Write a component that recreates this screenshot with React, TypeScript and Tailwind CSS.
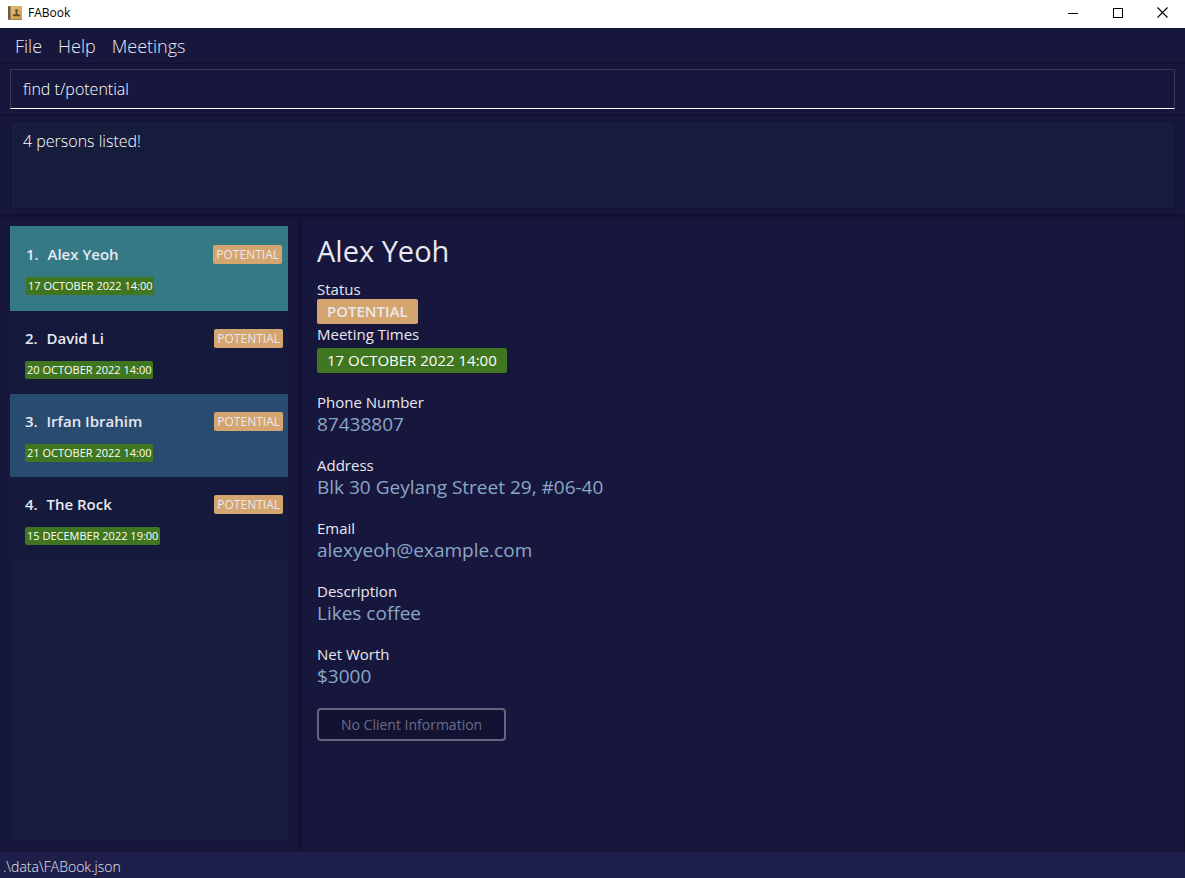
import { useState } from "react";

type Person = { name: string; status: string; meeting: string };

const persons: Person[] = [
  { name: "Alex Yeoh", status: "POTENTIAL", meeting: "17 OCTOBER 2022 14:00" },
  { name: "David Li", status: "POTENTIAL", meeting: "20 OCTOBER 2022 14:00" },
  { name: "Irfan Ibrahim", status: "POTENTIAL", meeting: "21 OCTOBER 2022 14:00" },
  { name: "The Rock", status: "POTENTIAL", meeting: "15 DECEMBER 2022 19:00" },
];

const fields = [
  { label: "Phone Number", value: "87438807" },
  { label: "Address", value: "Blk 30 Geylang Street 29, #06-40" },
  { label: "Email", value: "alexyeoh@example.com" },
  { label: "Description", value: "Likes coffee" },
  { label: "Net Worth", value: "$3000" },
];

function BookIcon() {
  return (
    <svg width="14" height="14" viewBox="0 0 14 14" aria-hidden="true">
      <defs>
        <linearGradient id="cover" x1="0" y1="0" x2="1" y2="1">
          <stop offset="0" stopColor="#e3bd7c" />
          <stop offset="1" stopColor="#cc9c4c" />
        </linearGradient>
      </defs>
      <rect width="14" height="14" rx="1" fill="url(#cover)" />
      <rect width="2" height="14" rx="1" fill="#6e5a48" />
      <rect x="2" width="1" height="14" fill="#a98450" />
      <rect x="0" y="13" width="14" height="1" fill="#a57c42" />
      <circle cx="8.5" cy="4.6" r="1.4" fill="#5d482a" />
      <path d="M7.800 5.500h1.400v2.600l2.800.7v1.400H5V8.800l2.800-.7z" fill="#5d482a" />
    </svg>
  );
}

function TitleBar() {
  const button = "flex h-7 w-[45px] items-center justify-center";
  return (
    <header className="flex h-7 items-center bg-white text-black">
      <div className="flex flex-1 items-center gap-[6px] pb-[2px] pl-2">
        <BookIcon />
        <h1 className="text-[12px] leading-4">FABook</h1>
      </div>
      <div className="flex pb-[3px]">
        <button className={button} aria-label="Minimize">
          <svg width="10" height="10" viewBox="0 0 10 10" shapeRendering="crispEdges">
            <path d="M0 5.500h10" stroke="#000" />
          </svg>
        </button>
        <button className={button} aria-label="Maximize">
          <svg width="10" height="10" viewBox="0 0 10 10" shapeRendering="crispEdges">
            <rect x=".5" y=".5" width="9" height="9" fill="none" stroke="#000" />
          </svg>
        </button>
        <button className={button} aria-label="Close">
          <svg width="11" height="11" viewBox="0 0 11 11">
            <path d="M.5.5l10 10M10.500.5l-10 10" stroke="#000" strokeWidth="1.1" />
          </svg>
        </button>
      </div>
    </header>
  );
}

function PersonCard({ person, index }: { person: Person; index: number }) {
  const tone =
    index === 0
      ? "border border-[#357985] bg-[#357985]"
      : index % 2 === 0
        ? "bg-[#294b6f]"
        : "bg-[#151a3c]";
  return (
    <li className={tone}>
      <div className="flex h-[83px] flex-col pt-[17px] pr-[5px] pl-[15px]">
        <div className="flex h-5 items-center">
          <span className="shrink-0 pr-px text-[15px] leading-5 font-semibold whitespace-pre">
            {index + 1}.{"  "}
          </span>
          <h2 className="flex-1 truncate text-[15px] leading-5 font-semibold">{person.name}</h2>
          <span className="rounded-[2px] bg-[#d5a570] px-[3px] text-[12px] leading-[19px]">
            {person.status}
          </span>
        </div>
        <div className="mt-[13px] flex">
          <span className="rounded-[2px] bg-[#3f761f] px-[2px] text-[11px] leading-[18px] whitespace-nowrap text-white">
            {person.meeting}
          </span>
        </div>
      </div>
    </li>
  );
}

export default function App() {
  const [command, setCommand] = useState("find t/potential");
  return (
    <div className="flex min-h-screen flex-col bg-[#17173d] font-['Open_Sans','Noto_Sans',sans-serif] text-[#e8e8f0]">
      <TitleBar />
      <nav className="flex h-9 items-center gap-4 border-b border-[#10102f] px-[15px] text-[18px] leading-6 font-light">
        <button>File</button>
        <button>Help</button>
        <button>Meetings</button>
      </nav>
      <div className="border-b-2 border-[#121232] px-[10px] py-[5px]">
        <input
          aria-label="Command"
          value={command}
          onChange={(e) => setCommand(e.target.value)}
          className="block h-10 w-full border border-[#3b3b4c] border-b-white bg-transparent px-3 text-[16px] font-light text-white outline-none"
        />
      </div>
      <div className="border-b-[3px] border-[#111131] px-[10px] pt-[5px] pb-[5px]">
        <output className="block h-[88px] border border-[#111231] bg-[#151c3c] px-3 py-[7px] text-[16px] leading-6 font-light text-white">
          4 persons listed!
        </output>
      </div>
      <main className="flex flex-1">
        <aside className="w-[301px] shrink-0 border-r-[3px] border-[#111131] px-[10px] pt-[9px] pb-[10px]">
          <ul className="h-full bg-[#151c3c]">
            {persons.map((p, i) => (
              <PersonCard key={p.name} person={p} index={i} />
            ))}
          </ul>
        </aside>
        <section className="flex min-w-0 flex-1 flex-col items-start border-r border-[#111131] pt-[14px] pl-4">
          <h2 className="text-[29px] leading-10">Alex Yeoh</h2>
          <h3 className="mt-2 text-[15px] leading-5">Status</h3>
          <span className="rounded-[2px] bg-[#d5a570] px-[10px] text-[15px] leading-[25px] font-semibold">
            POTENTIAL
          </span>
          <h3 className="text-[15px] leading-5">Meeting Times</h3>
          <span className="mt-1 rounded-[2px] bg-[#3f761f] px-[10px] text-[15px] leading-[25px] font-medium text-white">
            17 OCTOBER 2022 14:00
          </span>
          <dl className="mt-[19px] flex flex-col gap-[19px]">
            {fields.map((f) => (
              <div key={f.label}>
                <dt className="text-[15px] leading-5">{f.label}</dt>
                <dd className="text-[19px] leading-6 text-[#8aa6c6]">{f.value}</dd>
              </div>
            ))}
          </dl>
          <button
            disabled
            className="mt-5 h-[33px] rounded-[4px] border-2 border-[#65657e] bg-[#121233] px-[22px] text-[14px] text-[#6d6d85]"
          >
            No Client Information
          </button>
        </section>
      </main>
      <footer className="h-7 border-t-2 border-[#14143a] bg-[#1e1e4b] px-[3px] pt-[3px] text-[14px] leading-6 font-light">
        .\data\FABook.json
      </footer>
    </div>
  );
}
